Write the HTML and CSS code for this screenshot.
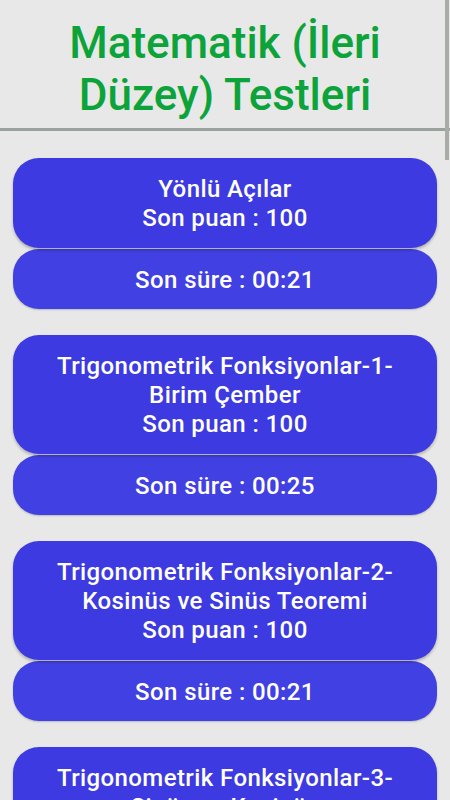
FILE: index.html
```html
<!DOCTYPE html>
<html lang="tr">
<head>
    <meta charset="UTF-8">
    <meta name="viewport" content="width=device-width, initial-scale=1.0">
    <title>Matematik (İleri Düzey) Testleri</title>
    <link rel="stylesheet" href="styles.css">
</head>
<body>
    <div class="scroll-thumb"></div>

    <header class="page-header">
        <h1>Matematik (İleri Düzey) Testleri</h1>
    </header>

    <main class="test-list">
        <div class="test-item">
            <div class="test-card">
                <span>Yönlü Açılar</span>
                <span>Son puan : 100</span>
            </div>
            <div class="time-card">Son süre : 00:21</div>
        </div>

        <div class="test-item">
            <div class="test-card">
                <span>Trigonometrik Fonksiyonlar-1-<br>Birim Çember</span>
                <span>Son puan : 100</span>
            </div>
            <div class="time-card">Son süre : 00:25</div>
        </div>

        <div class="test-item">
            <div class="test-card">
                <span>Trigonometrik Fonksiyonlar-2-<br>Kosinüs ve Sinüs Teoremi</span>
                <span>Son puan : 100</span>
            </div>
            <div class="time-card">Son süre : 00:21</div>
        </div>

        <div class="test-item">
            <div class="test-card">
                <span>Trigonometrik Fonksiyonlar-3-<br>Sinüs ve Kosinüs</span>
                <span>Son puan : 100</span>
            </div>
            <div class="time-card">Son süre : 00:30</div>
        </div>
    </main>
</body>
</html>
```

FILE: styles.css
```css
* {
    box-sizing: border-box;
    margin: 0;
    padding: 0;
}

html, body {
    height: 100%;
    overflow: hidden;
}

body {
    font-family: Roboto, "Noto Sans", Arial, sans-serif;
    background-color: #e8e8e8;
    position: relative;
}

.scroll-thumb {
    position: absolute;
    top: 0;
    right: 1px;
    width: 4px;
    height: 160px;
    background-color: #a9aba9;
}

.page-header {
    height: 131px;
    padding: 17px 20px 0;
    border-bottom: 3px solid #9ba19c;
}

.page-header h1 {
    text-align: center;
    color: #0ca43a;
    font-size: 44px;
    font-weight: 500;
    line-height: 52px;
}

.test-list {
    display: flex;
    flex-direction: column;
    gap: 26px;
    padding: 27px 13px 0;
}

.test-item {
    display: flex;
    flex-direction: column;
    gap: 1px;
}

.test-card,
.time-card {
    display: flex;
    flex-direction: column;
    align-items: center;
    text-align: center;
    color: white;
    font-size: 24px;
    font-weight: 500;
    letter-spacing: 0.4px;
    line-height: 29px;
    border-radius: 26px;
}

.test-card {
    background-color: #3c3ae0;
    padding: 17px 10px 15px;
    box-shadow: 0 2px 3px rgba(0, 0, 0, 0.25);
    position: relative;
    z-index: 1;
}

.time-card {
    background-color: #4140e3;
    padding: 17px 10px 14px;
    box-shadow: 0 1px 2px rgba(0, 0, 0, 0.2);
}
```
